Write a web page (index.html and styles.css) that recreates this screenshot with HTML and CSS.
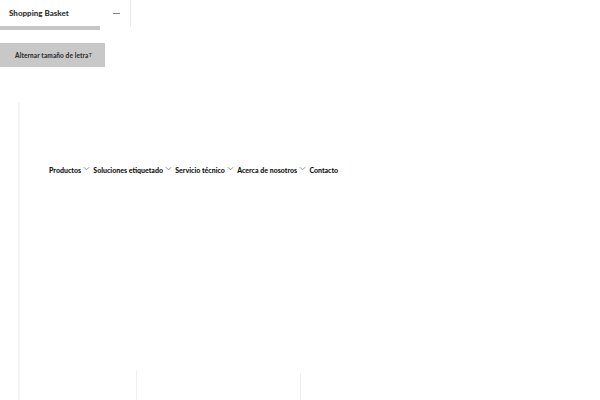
FILE: index.html
```html
<!DOCTYPE html>
<html>
<head>
<meta charset="utf-8">
<link rel="stylesheet" href="styles.css">
</head>
<body>
<div class="basket">
  <div class="basket-head">
    <span class="basket-title">Shopping Basket</span>
    <span class="basket-min"></span>
  </div>
  <div class="basket-bar"></div>
  <div class="basket-divider"></div>
</div>
<button class="font-toggle">Alternar tamaño de letra<sup class="tt">T</sup></button>
<div class="page">
  <nav class="nav">
    <a class="nav-item">Productos<svg class="chev" viewBox="0 0 8 5"><path d="M1 1l3 3 3-3" fill="none" stroke="#666" stroke-width="0.8"/></svg></a>
    <a class="nav-item">Soluciones etiquetado<svg class="chev" viewBox="0 0 8 5"><path d="M1 1l3 3 3-3" fill="none" stroke="#666" stroke-width="0.8"/></svg></a>
    <a class="nav-item">Servicio técnico<svg class="chev" viewBox="0 0 8 5"><path d="M1 1l3 3 3-3" fill="none" stroke="#666" stroke-width="0.8"/></svg></a>
    <a class="nav-item">Acerca de nosotros<svg class="chev" viewBox="0 0 8 5"><path d="M1 1l3 3 3-3" fill="none" stroke="#666" stroke-width="0.8"/></svg></a>
    <a class="nav-item">Contacto</a>
  </nav>
  <div class="cols">
    <div class="col col1"></div>
    <div class="col col2"></div>
  </div>
</div>
</body>
</html>
```
FILE: styles.css
```css
* { box-sizing: border-box; }
html, body { margin: 0; padding: 0; background: #fff; }
body {
  width: 600px; height: 400px; overflow: hidden;
  font-family: "Lato", "Open Sans", sans-serif;
  color: #222;
  position: relative;
}
.basket { position: relative; width: 131px; height: 30px; }
.basket-head {
  display: flex; align-items: center; justify-content: space-between;
  height: 26px; padding: 0 10px 0 9px; width: 131px;
}
.basket-title { font-size: 8px; font-weight: 900; letter-spacing: 0; color: #333; }
.basket-min { width: 7px; height: 1px; background: #888; margin-right: 1px; }
.basket-bar { width: 100px; height: 4px; background: #c6c6c6; }
.basket-divider { position: absolute; left: 130px; top: 0; width: 1px; height: 26px; background: #e8e8e8; }
.font-toggle {
  display: block; margin-top: 13px;
  width: 105px; height: 24px; border: none; background: #c8c8c8;
  font-family: inherit; font-size: 6.5px; font-weight: 900; color: #333;
  padding: 0 0 0 15px; text-align: left; cursor: pointer; letter-spacing: 0.1px;
}
.tt { font-size: 6px; vertical-align: 1px; font-weight: 400; }
.page {
  margin-top: 36px; margin-left: 18px;
  height: 297px;
  border-left: 2px solid #f3f3f3;
  padding: 63px 0 0 29px;
  position: relative;
}
.nav { display: flex; align-items: center; gap: 3.3px; }
.nav-item {
  display: flex; align-items: center; font-size: 7px; font-weight: 900; color: #111;
  white-space: nowrap;
}
.chev { width: 7px; height: 5px; margin-left: 2px; margin-top: -4px; }
.cols { position: absolute; left: 0; top: 266px; width: 300px; height: 40px; }
.col { position: absolute; top: 0; bottom: 0; width: 1px; background: #eee; }
.col1 { left: 116px; top: 2px; }
.col2 { left: 280px; top: 4px; }
```
